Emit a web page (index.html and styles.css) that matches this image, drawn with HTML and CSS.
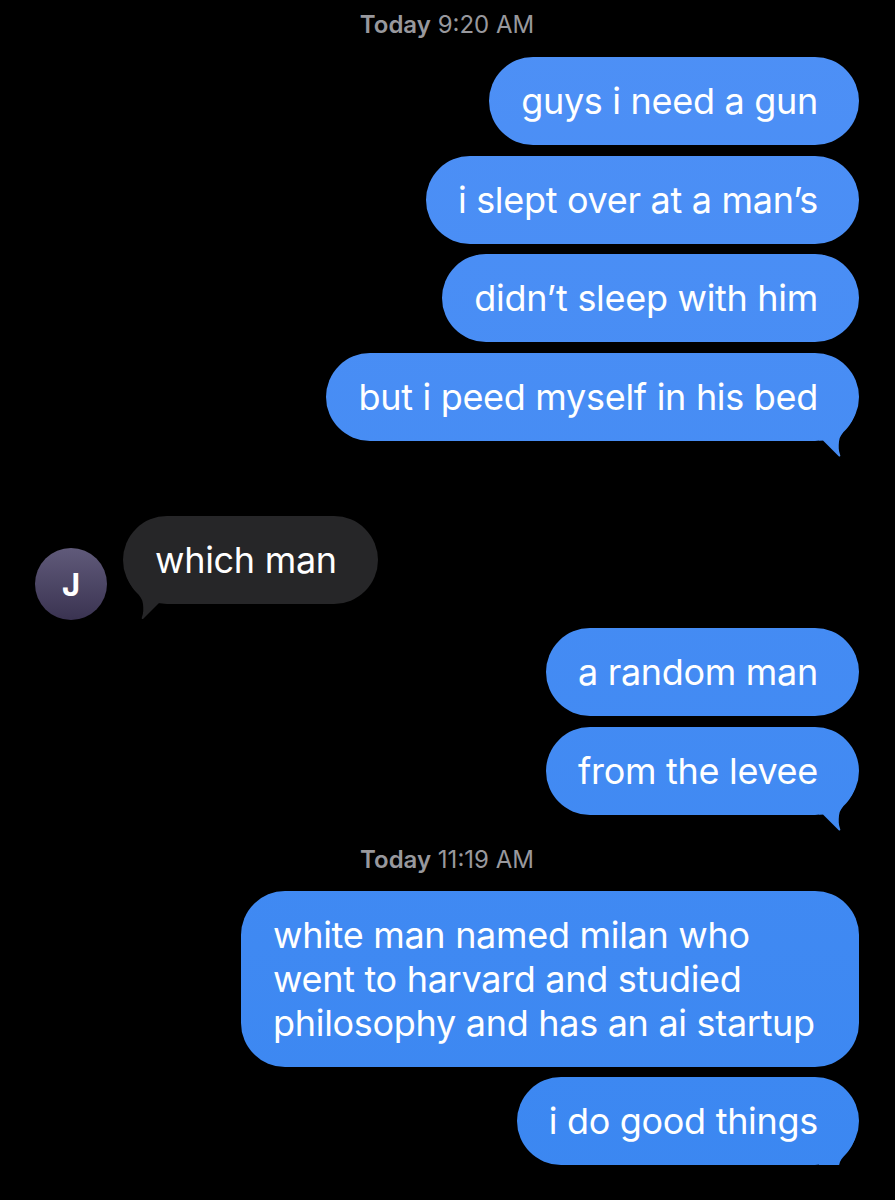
FILE: index.html
```html
<!DOCTYPE html>
<html lang="en">
<head>
  <meta charset="UTF-8">
  <meta name="viewport" content="width=device-width, initial-scale=1.0">
  <title>Messages</title>
  <link rel="stylesheet" href="styles.css">
</head>
<body>
  <div class="thread">
    <div class="stamp first"><b>Today</b> 9:20 AM</div>

    <div class="group sent">
      <div class="bubble">guys i need a gun</div>
      <div class="bubble">i slept over at a man’s</div>
      <div class="bubble">didn’t sleep with him</div>
      <div class="bubble tail">but i peed myself in his bed</div>
    </div>

    <div class="group received">
      <div class="avatar">J</div>
      <div class="bubble tail">which man</div>
    </div>

    <div class="group sent after-received">
      <div class="bubble">a random man</div>
      <div class="bubble tail">from the levee</div>
    </div>

    <div class="stamp"><b>Today</b> 11:19 AM</div>

    <div class="group sent">
      <div class="bubble">white man named milan who went to harvard and studied philosophy and has an ai startup</div>
      <div class="bubble tail">i do good things</div>
    </div>
  </div>
</body>
</html>
```

FILE: styles.css
```css
body {
  margin: 0;
  background: #000;
  color: #fff;
  font-family: 'Inter', 'Noto Sans', sans-serif;
}

.thread {
  display: flex;
  flex-direction: column;
  padding: 0 36px 0 35px;
}

.stamp {
  text-align: center;
  font-size: 24px;
  line-height: 28px;
  color: #98989d;
  margin: 31px 0 17px;
}

.stamp.first {
  margin: 11px 0 18px;
}

.stamp b {
  font-weight: 600;
}

.group {
  display: flex;
}

.group.sent {
  flex-direction: column;
  align-items: flex-end;
  gap: 10.5px;
}

.bubble {
  position: relative;
  font-size: 36px;
  line-height: 44px;
  letter-spacing: -0.3px;
  padding: 22px 41px 22px 32px;
  border-radius: 44px;
  max-width: 545px;
}

.sent .bubble {
  background: linear-gradient(#4e90f6, #3b87f1) fixed;
}

.sent .bubble.tail::after {
  content: "";
  position: absolute;
  right: 0;
  bottom: -16px;
  width: 40px;
  height: 42px;
  background: inherit;
  clip-path: path("M0 0H36C34.2 4 32 10 27 15C23 19 20.5 22 20 27C19.5 32 19.5 36 21 40Q22 42 20 42L4 26H0Z");
}

/* received row: avatar sits level with the tail tip */
.group.received {
  align-items: flex-end;
  gap: 16px;
  margin-top: 75.5px;
}

.received .bubble {
  background: #262628;
  margin-bottom: 16px;
}

.received .bubble.tail::after {
  content: "";
  position: absolute;
  left: 0;
  bottom: -15px;
  width: 40px;
  height: 42px;
  background: #262628;
  clip-path: path("M40 0H4C5.8 4 8 10 13 15C17 19 19.5 22 20 27C20.5 32 20.5 36 19 40Q18 42 20 42L36 26H40Z");
}

.avatar {
  width: 72px;
  height: 72px;
  flex-shrink: 0;
  border-radius: 50%;
  background: linear-gradient(#605a7a, #3a3351);
  display: flex;
  align-items: center;
  justify-content: center;
  font-size: 31px;
  font-weight: 700;
}

.group.after-received {
  margin-top: 8px;
}
```
